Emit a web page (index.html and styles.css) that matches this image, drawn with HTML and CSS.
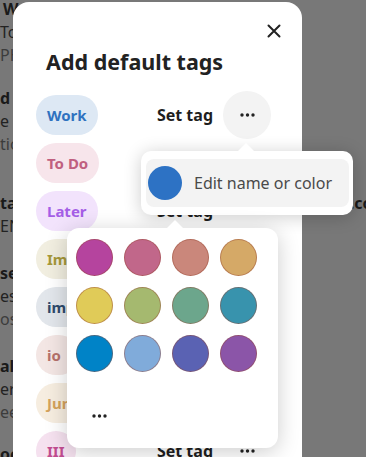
FILE: index.html
```html
<!DOCTYPE html>
<html>
<head>
<meta charset="utf-8">
<link rel="stylesheet" href="styles.css">
</head>
<body>
<div class="bg">
  <div class="entry e1"><p class="t ind">Weekly review</p><p class="d">To check</p><p class="m">PHP notes</p></div>
  <div class="entry e2"><p class="t">d Sync</p><p class="d">e backup</p><p class="m">tion list</p></div>
  <div class="entry e3"><p class="t split"><span>ta sources</span><span class="far">.com</span></p><p class="d">EN docs</p></div>
  <div class="entry e4"><p class="t">se notes</p><p class="d">es list</p><p class="m">os tips</p></div>
  <div class="entry e5"><p class="t">al plan</p><p class="d">er goals</p><p class="m">eekly</p></div>
  <div class="entry e6"><p class="t">oc index</p></div>
</div>

<div class="modal">
  <button class="close" aria-label="Close">
    <svg width="14" height="14" viewBox="0 0 14 14"><path d="M1.5 1.5 L12.5 12.5 M12.5 1.5 L1.5 12.5" stroke="#222" stroke-width="2" stroke-linecap="round" fill="none"/></svg>
  </button>
  <h1 class="title">Add default tags</h1>
  <div class="rows">
    <div class="row"><span class="pill work">Work</span><div class="act"><span class="set">Set tag</span><span class="more on"><svg width="15" height="4" viewBox="0 0 15 4"><circle cx="2" cy="2" r="1.7"/><circle cx="7.5" cy="2" r="1.7"/><circle cx="13" cy="2" r="1.7"/></svg></span></div></div>
    <div class="row"><span class="pill todo">To Do</span><div class="act"><span class="set">Set tag</span><span class="more"><svg width="15" height="4" viewBox="0 0 15 4"><circle cx="2" cy="2" r="1.7"/><circle cx="7.5" cy="2" r="1.7"/><circle cx="13" cy="2" r="1.7"/></svg></span></div></div>
    <div class="row"><span class="pill later">Later</span><div class="act"><span class="set">Set tag</span><span class="more"><svg width="15" height="4" viewBox="0 0 15 4"><circle cx="2" cy="2" r="1.7"/><circle cx="7.5" cy="2" r="1.7"/><circle cx="13" cy="2" r="1.7"/></svg></span></div></div>
    <div class="row"><span class="pill imp1">Important</span><div class="act"><span class="set">Set tag</span><span class="more"><svg width="15" height="4" viewBox="0 0 15 4"><circle cx="2" cy="2" r="1.7"/><circle cx="7.5" cy="2" r="1.7"/><circle cx="13" cy="2" r="1.7"/></svg></span></div></div>
    <div class="row"><span class="pill imp2">improve</span><div class="act"><span class="set">Set tag</span><span class="more"><svg width="15" height="4" viewBox="0 0 15 4"><circle cx="2" cy="2" r="1.7"/><circle cx="7.5" cy="2" r="1.7"/><circle cx="13" cy="2" r="1.7"/></svg></span></div></div>
    <div class="row"><span class="pill io">io</span><div class="act"><span class="set">Set tag</span><span class="more"><svg width="15" height="4" viewBox="0 0 15 4"><circle cx="2" cy="2" r="1.7"/><circle cx="7.5" cy="2" r="1.7"/><circle cx="13" cy="2" r="1.7"/></svg></span></div></div>
    <div class="row"><span class="pill jun">Junk</span><div class="act"><span class="set">Set tag</span><span class="more"><svg width="15" height="4" viewBox="0 0 15 4"><circle cx="2" cy="2" r="1.7"/><circle cx="7.5" cy="2" r="1.7"/><circle cx="13" cy="2" r="1.7"/></svg></span></div></div>
    <div class="row"><span class="pill iii">III</span><div class="act"><span class="set">Set tag</span><span class="more"><svg width="15" height="4" viewBox="0 0 15 4"><circle cx="2" cy="2" r="1.7"/><circle cx="7.5" cy="2" r="1.7"/><circle cx="13" cy="2" r="1.7"/></svg></span></div></div>
  </div>
</div>

<div class="pop edit">
  <div class="item"><span class="dot"></span><span class="label">Edit name or color</span></div>
</div>

<div class="pop colors">
  <div class="grid">
    <span class="sw c1"></span><span class="sw c2"></span><span class="sw c3"></span><span class="sw c4"></span>
    <span class="sw c5"></span><span class="sw c6"></span><span class="sw c7"></span><span class="sw c8"></span>
    <span class="sw c9"></span><span class="sw c10"></span><span class="sw c11"></span><span class="sw c12"></span>
  </div>
  <div class="extra"><svg width="15" height="4" viewBox="0 0 15 4"><circle cx="2" cy="2" r="1.7"/><circle cx="7.5" cy="2" r="1.7"/><circle cx="13" cy="2" r="1.7"/></svg></div>
</div>
</body>
</html>
```

FILE: styles.css
```css
* { box-sizing: border-box; margin: 0; padding: 0; }
html, body { width: 366px; height: 457px; overflow: hidden; }
body {
  background: #787878;
  font-family: "Noto Sans", "DejaVu Sans", sans-serif;
  position: relative;
}

/* background page */
.bg { width: 400px; font-size: 16px; line-height: 23px; color: #1c1c1c; white-space: nowrap; }
.bg .t { font-weight: 700; color: #1a1a1a; }
.bg .d { color: #222; }
.bg .m { color: #3c3c3c; }
.bg .ind { padding-left: 3px; }
.bg .split { display: flex; justify-content: space-between; }
.bg .far { margin-right: 12px; }
.e1 { margin-top: -2px; }
.e2 { margin-top: 20px; }
.e3 { margin-top: 36px; }
.e4 { margin-top: 24px; }
.e5 { margin-top: 24px; }
.e6 { margin-top: 19px; }

/* modal */
.modal {
  position: absolute;
  left: 13px; top: 2px;
  width: 289px; height: 480px;
  background: #fff;
  border-radius: 16px;
  padding: 17px 31px 0 23px;
  display: flex;
  flex-direction: column;
}
.close {
  align-self: flex-end;
  width: 24px; height: 24px;
  margin-right: -15px;
  border: 0; background: none;
  display: flex; align-items: center; justify-content: center;
}
.title {
  margin-top: 5px;
  padding-left: 10px;
  font-size: 21.5px;
  line-height: 28px;
  font-weight: 700;
  color: #222;
}
.rows { margin-top: 15px; display: flex; flex-direction: column; }
.row {
  height: 48px;
  display: flex;
  align-items: center;
  justify-content: space-between;
}
.pill {
  height: 40px;
  line-height: 40px;
  padding: 0 11px;
  border-radius: 20px;
  font-size: 15px;
  font-weight: 700;
  white-space: nowrap;
}
.work { background: #dde8f4; color: #2f72c0; }
.todo { background: #f7e5eb; color: #c0607f; }
.later { background: #f2e3fc; color: #a45ee6; }
.imp1 { background: #f1eee0; color: #a6983a; }
.imp2 { background: #e2e6eb; color: #2e4a6c; }
.io { background: #f3e6e4; color: #b6716b; padding-right: 18px; }
.jun { background: #f6ede0; color: #d4a35c; }
.iii { background: #f5e1ef; color: #c14c90; }

.act { display: flex; align-items: center; gap: 10px; }
.set { font-size: 16px; font-weight: 700; color: #1e1e1e; }
.more {
  width: 48px; height: 48px;
  border-radius: 50%;
  display: flex; align-items: center; justify-content: center;
  fill: #222;
}
.more.on { background: #f3f3f3; }

/* popovers */
.pop {
  position: absolute;
  background: #fff;
}
.pop::before {
  content: "";
  position: absolute;
  top: -8px;
  width: 0; height: 0;
  border-left: 8px solid transparent;
  border-right: 8px solid transparent;
  border-bottom: 8px solid #fff;
}
.edit {
  left: 141px; top: 151px;
  width: 212px; height: 64px;
  border-radius: 10px;
  padding: 8px 4px 7px 5px;
  box-shadow: 0 2px 18px rgba(0,0,0,0.2);
}
.edit::before { left: 97px; }
.item {
  height: 48px;
  background: #f3f3f3;
  border-radius: 8px;
  display: flex;
  align-items: center;
  gap: 12px;
  padding-left: 2px;
}
.dot { width: 34px; height: 34px; border-radius: 50%; background: #2d72c4; }
.label { font-size: 16px; color: #4a4a4a; }

.colors {
  left: 67px; top: 228px;
  width: 211px; height: 220px;
  border-radius: 12px;
  padding: 11px 9px;
  box-shadow: 0 4px 22px rgba(0,0,0,0.2);
}
.colors::before { left: 100px; }
.grid {
  display: grid;
  grid-template-columns: repeat(4, 37px);
  grid-auto-rows: 37px;
  gap: 11px;
}
.sw { border-radius: 50%; border: 1px solid rgba(150,70,50,0.45); }
.c1 { background: #b5449e; }
.c2 { background: #c1678a; }
.c3 { background: #ca877b; }
.c4 { background: #d5a967; }
.c5 { background: #e0cb58; }
.c6 { background: #a5b96f; }
.c7 { background: #6ca68c; }
.c8 { background: #3893ad; }
.c9 { background: #0083c7; }
.c10 { background: #80abda; }
.c11 { background: #5a62b3; }
.c12 { background: #8b55a8; }
.extra { margin-top: 40px; margin-left: 16px; height: 4px; line-height: 0; fill: #222; }
```
